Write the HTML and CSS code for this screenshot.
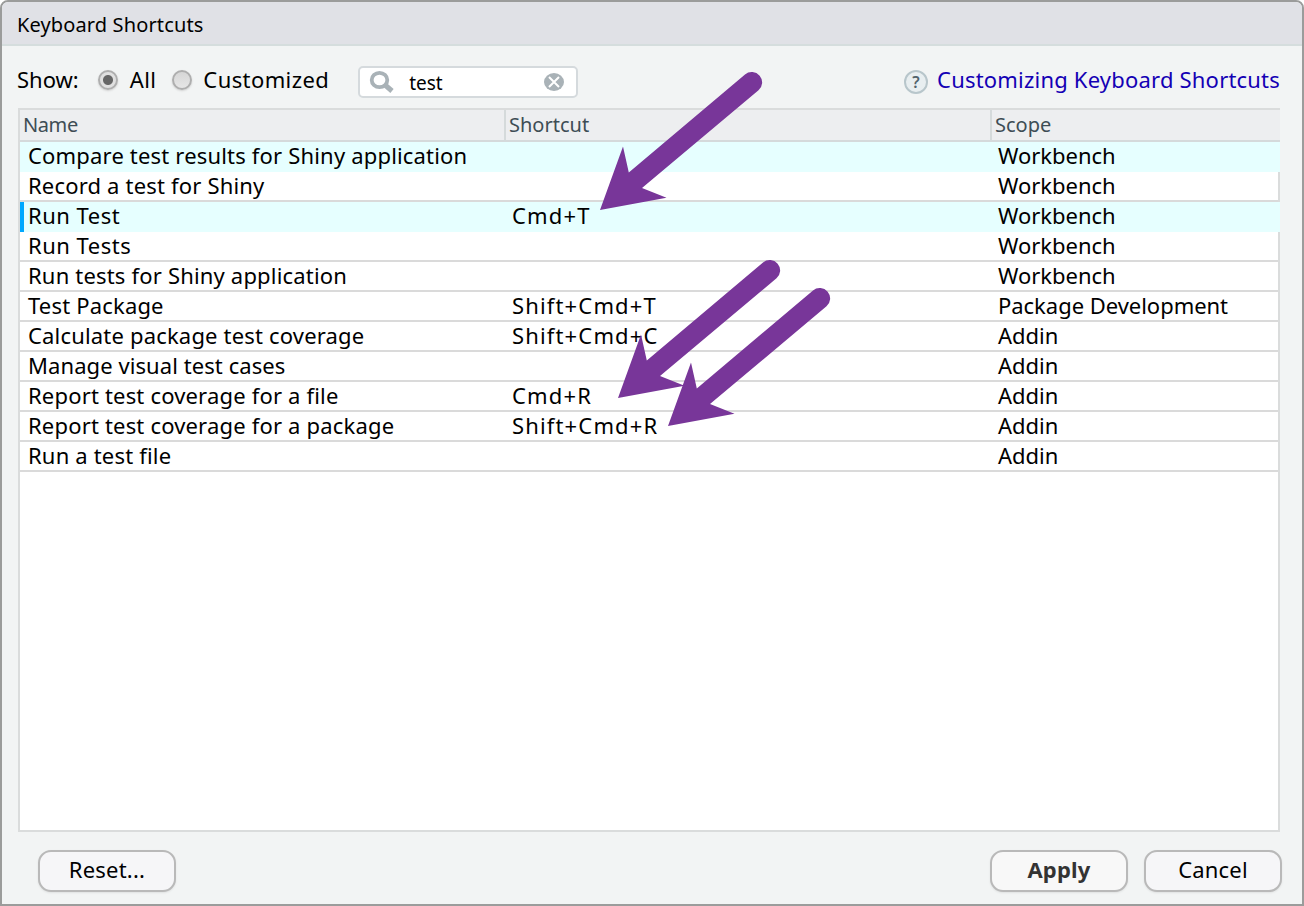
FILE: index.html
```html
<!DOCTYPE html>
<html lang="en">
<head>
<meta charset="utf-8">
<title>Keyboard Shortcuts</title>
<link rel="stylesheet" href="styles.css">
</head>
<body>
<div class="dialog">
  <header class="titlebar"><span class="title">Keyboard Shortcuts</span></header>
  <div class="toolbar">
    <span class="show">Show:</span>
    <span class="radio checked"></span><span class="label-all">All</span>
    <span class="radio second"></span><span class="label-custom">Customized</span>
    <div class="search">
      <svg class="glass" width="26" height="24" viewBox="0 0 26 24"><ellipse cx="10.500" cy="10" rx="7.800" ry="7.200" fill="none" stroke="#a9b2b7" stroke-width="3.800"/><path d="M15.500 14.500L23 21" stroke="#a9b2b7" stroke-width="5" fill="none"/></svg>
      <span class="query">test</span>
      <svg class="clear" width="20" height="18" viewBox="0 0 20 18"><ellipse cx="10" cy="9" rx="10" ry="9" fill="#a9b2b7"/><path d="M5 4L15 14M15 4L5 14" stroke="#fff" stroke-width="2"/></svg>
    </div>
    <div class="help"><span class="help-icon">?</span><span class="link">Customizing Keyboard Shortcuts</span></div>
  </div>
  <div class="grid">
    <div class="row head"><span class="cell">Name</span><span class="cell">Shortcut</span><span class="cell">Scope</span></div>
    <div class="row lit"><span class="cell">Compare test results for Shiny application</span><span class="cell keys"></span><span class="cell scope">Workbench</span></div>
    <div class="row"><span class="cell">Record a test for Shiny</span><span class="cell keys"></span><span class="cell scope">Workbench</span></div>
    <div class="row lit selected"><span class="cell short">Run Test</span><span class="cell keys">Cmd+T</span><span class="cell scope">Workbench</span></div>
    <div class="row"><span class="cell short">Run Tests</span><span class="cell keys"></span><span class="cell scope">Workbench</span></div>
    <div class="row"><span class="cell">Run tests for Shiny application</span><span class="cell keys"></span><span class="cell scope">Workbench</span></div>
    <div class="row"><span class="cell">Test Package</span><span class="cell keys">Shift+Cmd+T</span><span class="cell scope">Package Development</span></div>
    <div class="row"><span class="cell">Calculate package test coverage</span><span class="cell keys">Shift+Cmd+C</span><span class="cell scope">Addin</span></div>
    <div class="row"><span class="cell tight">Manage visual test cases</span><span class="cell keys"></span><span class="cell scope">Addin</span></div>
    <div class="row"><span class="cell">Report test coverage for a file</span><span class="cell keys">Cmd+R</span><span class="cell scope">Addin</span></div>
    <div class="row"><span class="cell">Report test coverage for a package</span><span class="cell keys">Shift+Cmd+R</span><span class="cell scope">Addin</span></div>
    <div class="row"><span class="cell">Run a test file</span><span class="cell keys"></span><span class="cell scope">Addin</span></div>
  </div>
  <footer class="actions">
    <span class="button">Reset...</span>
    <span class="spacer"></span>
    <span class="button primary">Apply</span>
    <span class="button">Cancel</span>
  </footer>
  <svg class="arrows" width="1304" height="906" viewBox="0 0 1304 906">
    <defs><path id="arrow" d="M600 210L623 146.500L628.800 172.500L745 74.500A10 10 0 0 1 758.500 90.300L642 188L666.500 197.800Z"/></defs>
    <g fill="#783699"><use href="#arrow"/><use href="#arrow" x="18" y="188"/><use href="#arrow" x="68" y="216"/></g>
  </svg>
</div>
</body>
</html>
```
FILE: styles.css
```css
* { box-sizing: border-box; }
body { margin: 0; background: #fff; }
.dialog {
  position: relative;
  display: flex;
  flex-direction: column;
  width: 1304px;
  height: 906px;
  border: 2px solid #9b9c9b;
  border-radius: 8px 8px 0 0;
  background: #f2f4f4;
  overflow: hidden;
  font: 22px/30px "Noto Sans", sans-serif;
  color: #000;
  white-space: nowrap;
}
.titlebar {
  height: 44px;
  padding: 8px 0 0 15px;
  background: #e0e1e6;
  border-bottom: 2px solid #d5dddd;
  font-size: 20px;
  letter-spacing: 0.13px;
}
.toolbar {
  display: flex;
  align-items: center;
  height: 62px;
  padding: 5px 22px 0 15px;
}
.show, .label-all, .label-custom, .link { padding-bottom: 2px; }
.radio {
  width: 20px;
  height: 20px;
  margin-left: 19px;
  border: 2px solid #aeaeae;
  border-radius: 50%;
  background: linear-gradient(#d6d6d6, #e6e6e6);
  box-shadow: 0 1px 2px #d0d0d0;
}
.radio.checked { background: radial-gradient(circle, #666 4.500px, #e0e0e0 5.500px); }
.label-all { margin-left: 12px; letter-spacing: 0.4px; }
.radio.second { margin-left: 16px; }
.label-custom { margin-left: 11px; letter-spacing: 0.4px; }
.search {
  display: flex;
  align-items: center;
  width: 220px;
  height: 32px;
  margin: 5px 0 0 29px;
  padding: 0 12px 0 9px;
  border: 2px solid #d5dadd;
  border-radius: 5px;
  background: #fff;
  font-size: 19px;
}
.query { margin-left: 14px; padding-top: 2px; flex: 1; }
.help { display: flex; align-items: center; margin-left: auto; color: #1400b4; letter-spacing: 0.2px; }
.help-icon {
  width: 24px;
  height: 24px;
  margin: 4px 9px 0 0;
  border: 2px solid #b8c6cb;
  border-radius: 50%;
  background: #e8eef0;
  color: #52636c;
  font: 600 16px/20px "Noto Sans", sans-serif;
  text-align: center;
}
.grid {
  width: 1262px;
  height: 724px;
  margin-left: 16px;
  border: 2px solid #dadcdc;
  background: #fff;
}
.row {
  display: grid;
  grid-template-columns: 484px 486px 288px;
  width: 1258px;
  height: 30px;
  border-bottom: 2px solid #dadada;
}
.cell { padding-left: 8px; line-height: 27px; letter-spacing: 0.18px; }
.short { letter-spacing: 0.5px; }
.tight { letter-spacing: 0.08px; }
.keys { letter-spacing: 1.15px; }
.scope { letter-spacing: -0.03px; }
.row.head {
  width: 1260px;
  height: 32px;
  background: #edeef0;
  border-color: #d5dadb;
  color: #3e4d55;
  font-size: 20px;
}
.head .cell { padding-left: 3px; line-height: 29px; letter-spacing: 0; }
.head .cell:first-child { letter-spacing: -0.4px; }
.head .cell + .cell { border-left: 2px solid #d5dadb; }
.row.lit { width: 1260px; background: #e6ffff; border-bottom: 0; }
.row.selected { background: linear-gradient(90deg, #00a8ff 4px, #e6ffff 4px); }
.actions { display: flex; padding: 18px 20px 0 36px; gap: 16px; }
.spacer { flex: 1; }
.button {
  width: 138px;
  height: 42px;
  border: 2px solid #b9b9b9;
  border-radius: 13px;
  background: #f6f6f8;
  box-shadow: 0 1px 2px #dfe1e1;
  text-align: center;
  line-height: 35px;
  letter-spacing: 0.2px;
}
.primary { background: #f8f8f8; color: #333; font-weight: bold; }
.arrows { position: absolute; left: -2px; top: -2px; }
```
